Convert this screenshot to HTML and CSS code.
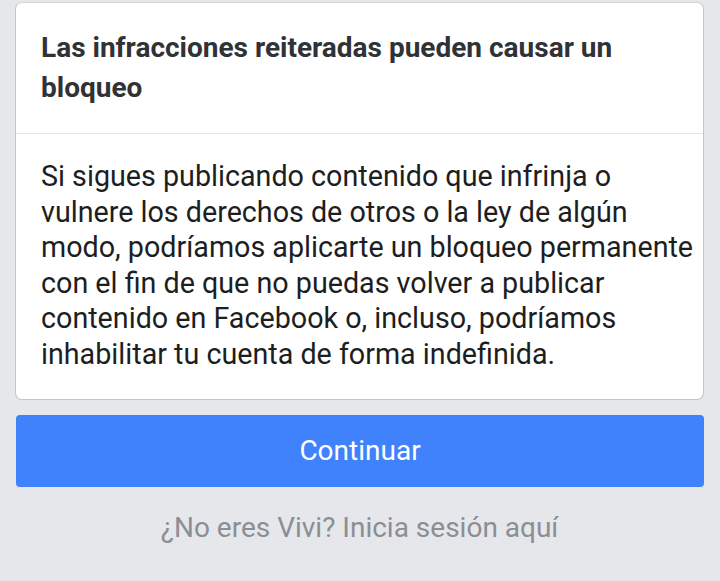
FILE: index.html
```html
<!DOCTYPE html>
<html>
<head>
    <title>Bloqueo</title>
    <link rel="stylesheet" href="styles.css">
</head>
<body>
    <div class="page">
        <div class="card">
            <div class="card-header">
                Las infracciones reiteradas pueden causar un bloqueo
            </div>
            <div class="card-body">
                Si sigues publicando contenido que infrinja o vulnere los derechos de otros o la ley de algún modo, podríamos aplicarte un bloqueo permanente con el fin de que no puedas volver a publicar contenido en Facebook o, incluso, podríamos inhabilitar tu cuenta de forma indefinida.
            </div>
        </div>
        <button class="continue-button">Continuar</button>
        <a class="switch-link" href="#">¿No eres Vivi? Inicia sesión aquí</a>
    </div>
</body>
</html>
```

FILE: styles.css
```css
body {
    margin: 0;
    background-color: #e6e7eb;
    font-family: Roboto, "Liberation Sans", Arial, sans-serif;
}

.page {
    display: flex;
    flex-direction: column;
    padding: 2px 16px 0 15px;
}

.card {
    background-color: #ffffff;
    border: 1px solid #c4c5c9;
    border-top-color: #d3d4d8;
    border-radius: 7px;
}

.card-header {
    padding: 25px 24px 25px 25px;
    font-size: 28px;
    line-height: 40px;
    font-weight: bold;
    color: #303236;
    border-bottom: 1px solid #e4e4e6;
}

.card-body {
    padding: 25px 0 26px 25px;
    font-size: 28.7px;
    line-height: 35.6px;
    color: #1c1e21;
}

.continue-button {
    margin: 15px 0 0 1px;
    height: 72px;
    border: none;
    border-radius: 4px;
    background-color: #3f82fb;
    color: #ffffff;
    font-family: inherit;
    font-size: 28px;
}

.switch-link {
    margin-top: 24px;
    text-align: center;
    font-size: 28px;
    color: #8b8e93;
    text-decoration: none;
}
```
